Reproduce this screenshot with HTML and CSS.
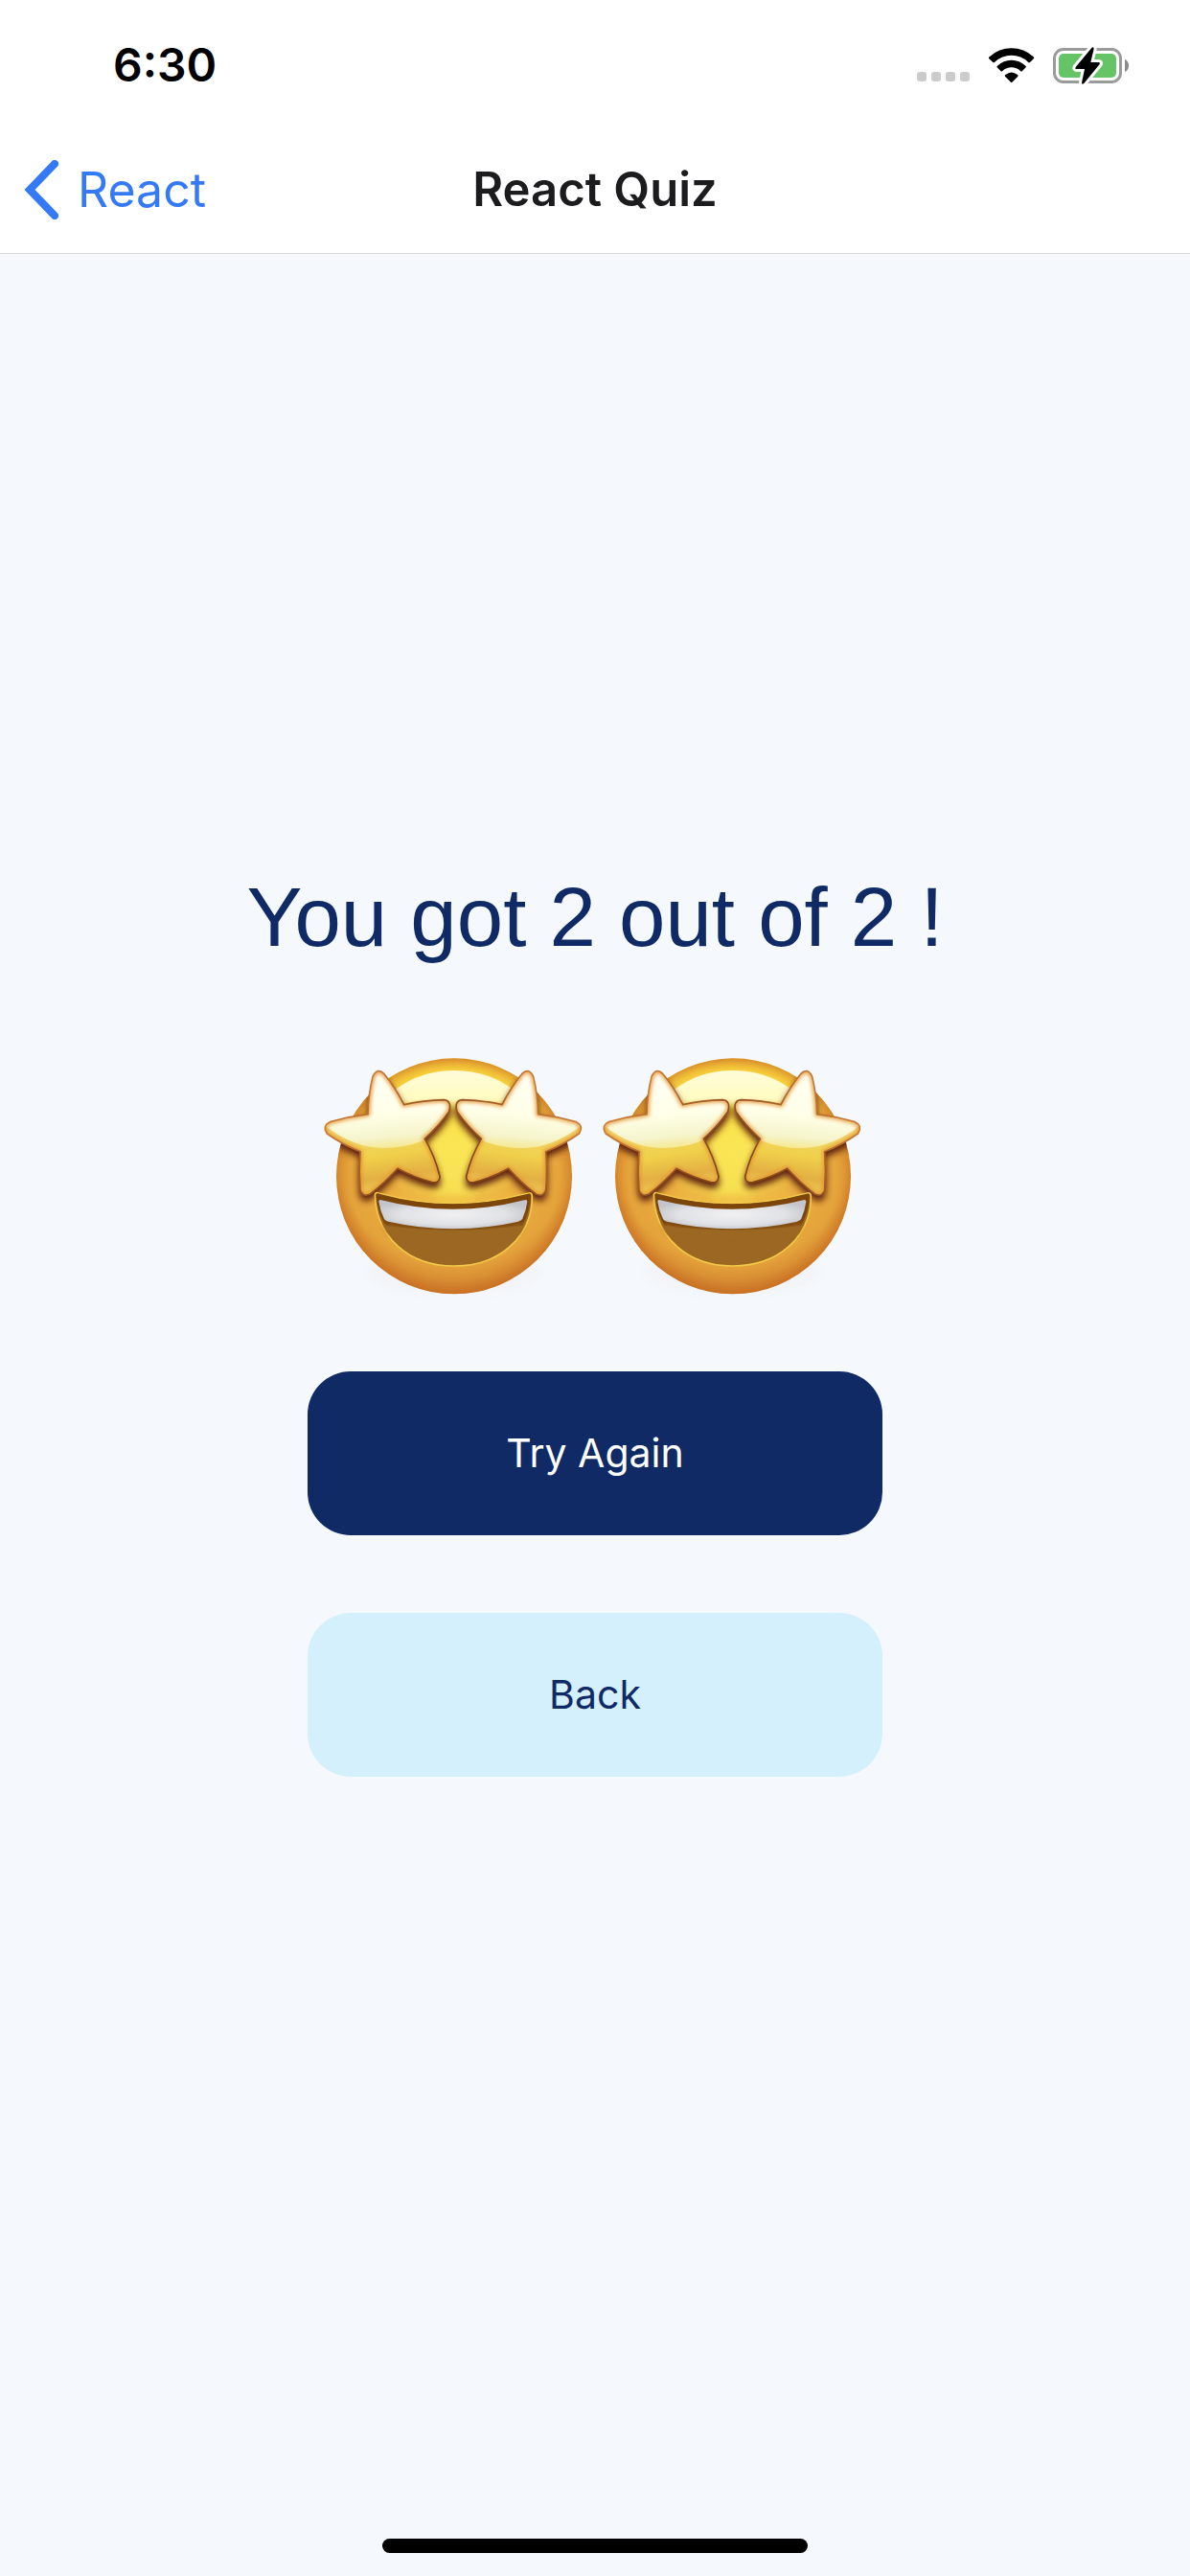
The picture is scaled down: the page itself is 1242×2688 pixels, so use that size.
FILE: index.html
```html
<!DOCTYPE html>
<html lang="en">
<head>
<meta charset="utf-8">
<meta name="viewport" content="width=device-width, initial-scale=1">
<title>React Quiz</title>
<link rel="stylesheet" href="styles.css">
</head>
<body>
<div class="screen">
  <header class="header">
    <div class="status-bar">
      <span class="clock">6:30</span>
      <div class="status-icons">
        <svg class="icon-signal" viewBox="0 0 165 30" aria-hidden="true">
          <rect width="30" height="30" rx="9"/><rect x="45" width="30" height="30" rx="9"/><rect x="90" width="30" height="30" rx="9"/><rect x="135" width="30" height="30" rx="9"/>
        </svg>
        <svg class="icon-wifi" viewBox="333 84 147 114" aria-hidden="true">
          <path d="M336 120Q335 117 338 115A100 100 0 0 1 476 115Q479 117 477 120L465 132Q462 134 459 131A76 76 0 0 0 355 131Q352 134 349 132Z"/>
          <path d="M362 148Q360 145 363 143A63 63 0 0 1 451 143Q454 145 452 148L441 159Q438 162 435 159A41 41 0 0 0 379 159Q376 162 373 159Z"/>
          <path d="M387 176Q385 173 388 171Q407 156 426 171Q429 173 427 176L409 194Q407 196 405 194Z"/>
        </svg>
        <svg class="icon-battery" viewBox="537 81 240 123" aria-hidden="true">
          <rect x="541.5" y="91.5" width="207" height="102" rx="28" fill="none" stroke="#9b9b9b" stroke-width="9"/>
          <rect x="555" y="105" width="180" height="75" rx="15" fill="#65c466"/>
          <path d="M762 122Q774 128 774 142Q774 157 762 162Z" fill="#8b8b8b"/>
          <path d="M658 87L608 147Q605 153 611 153L636 153L627 196Q627 203 634 198L683 138Q686 132 679 132L655 132L665 90Q664 82 658 87Z" fill="#000" stroke="#fff" stroke-width="18" stroke-linejoin="round" paint-order="stroke"/>
        </svg>
      </div>
    </div>
    <nav class="nav-bar">
      <a class="nav-back" href="#react">
        <svg class="icon-chevron" viewBox="0 0 37 62" aria-hidden="true"><path d="M33 4L7 31L33 58" /></svg>
        <span>React</span>
      </a>
      <h1 class="nav-title">React Quiz</h1>
    </nav>
  </header>

  <main class="result">
    <p class="score">You got 2 out of 2 !</p>
    <div class="faces" role="img" aria-label="Two star-struck faces">
      <svg class="face" viewBox="30 0 873 870" aria-hidden="true">
        <defs>
          <radialGradient id="skin" gradientUnits="userSpaceOnUse" cx="462" cy="350" r="460">
            <stop offset="0" stop-color="#fbee5c"/><stop offset=".28" stop-color="#f6d751"/><stop offset=".48" stop-color="#e9ad40"/><stop offset=".8" stop-color="#e5a43b"/><stop offset="1" stop-color="#cc782b"/>
          </radialGradient>
          <radialGradient id="rim" gradientUnits="userSpaceOnUse" cx="462" cy="442" r="369">
            <stop offset=".88" stop-color="#d17b24" stop-opacity="0"/><stop offset="1" stop-color="#c4671c" stop-opacity=".5"/>
          </radialGradient>
          <linearGradient id="crown" x1="0" y1="0" x2="0" y2="1">
            <stop offset="0" stop-color="#fbd23a"/><stop offset=".7" stop-color="#fbe34d"/><stop offset="1" stop-color="#fbe34d" stop-opacity="0"/>
          </linearGradient>
          <linearGradient id="shine" x1="0" y1="0" x2="0" y2="1">
            <stop offset="0" stop-color="#fffcd9"/><stop offset=".6" stop-color="#fffbc0"/><stop offset="1" stop-color="#faea60" stop-opacity="0"/>
          </linearGradient>
          <linearGradient id="star" gradientUnits="userSpaceOnUse" x1="225" y1="110" x2="280" y2="500">
            <stop offset="0" stop-color="#fff7d8"/><stop offset=".5" stop-color="#f1d669"/><stop offset=".68" stop-color="#f0d04a"/><stop offset=".85" stop-color="#e3b044"/><stop offset="1" stop-color="#f3d257"/>
          </linearGradient>
          <linearGradient id="edge" gradientUnits="userSpaceOnUse" x1="80" y1="160" x2="430" y2="430">
            <stop offset="0" stop-color="#d9893a"/><stop offset=".5" stop-color="#a8602a"/><stop offset="1" stop-color="#7c421a"/>
          </linearGradient>
          <linearGradient id="gloss" gradientUnits="userSpaceOnUse" x1="230" y1="120" x2="250" y2="355">
            <stop offset="0" stop-color="#fffff5"/><stop offset=".55" stop-color="#ffffe8"/><stop offset=".85" stop-color="#f5f4cc"/><stop offset="1" stop-color="#f6e892"/>
          </linearGradient>
          <radialGradient id="teeth" cx=".5" cy=".5" r=".55"><stop offset="0" stop-color="#f0f0f2"/><stop offset=".65" stop-color="#e1e2e5"/><stop offset="1" stop-color="#c3c5cb"/></radialGradient>
          <filter id="soft" x="-30%" y="-30%" width="160%" height="160%"><feGaussianBlur stdDeviation="11"/></filter>
          <filter id="softer" x="-30%" y="-30%" width="160%" height="160%"><feGaussianBlur stdDeviation="6"/></filter>
          <clipPath id="head"><circle cx="462" cy="442" r="369"/></clipPath>
          <path id="star-shape" d="M207 130Q222 100 243 122Q278 164 305 218Q366 204 430 203Q456 206 446 240Q414 286 370 325Q402 380 417 443Q416 465 392 461Q335 446 285 418Q246 462 199 498Q176 508 168 486Q163 426 168 365Q114 344 64 309Q48 284 73 272Q132 255 192 248Q193 188 207 130Z"/>
          <clipPath id="star-clip"><use href="#star-shape"/></clipPath>
          <g id="star-eye">
            <use href="#star-shape" fill="url(#star)"/>
            <g clip-path="url(#star-clip)">
              <path d="M40 90H470V250Q390 354 240 354Q140 354 40 270Z" fill="url(#gloss)"/>
              <use href="#star-shape" fill="none" stroke="#e3922f" stroke-width="13" filter="url(#softer)"/>
            </g>
            <use href="#star-shape" fill="none" stroke="url(#edge)" stroke-width="5"/>
          </g>
          <g id="star-face">
            <ellipse cx="462" cy="745" rx="280" ry="76" fill="#b89a78" opacity=".04" filter="url(#soft)"/>
            <circle cx="462" cy="442" r="369" fill="url(#skin)"/>
            <g clip-path="url(#head)">
              <ellipse cx="462" cy="230" rx="275" ry="150" fill="url(#crown)" filter="url(#soft)"/>
              <ellipse cx="462" cy="440" rx="75" ry="130" fill="#f9e453" opacity=".65" filter="url(#soft)"/>
              <circle cx="462" cy="442" r="369" fill="url(#rim)"/>
              <path d="M240 205Q330 111 462 111Q594 111 684 205L650 260Q462 200 274 260Z" fill="url(#shine)"/>
              <g fill="#5f240b" stroke="#5f240b" stroke-width="6" filter="url(#soft)">
                <use href="#star-shape" y="16"/>
                <use href="#star-shape" y="16" transform="matrix(-1 0 0 1 917 0)"/>
              </g>
              <path d="M300 480Q458 525 620 480L670 514Q462 550 248 514Z" fill="#eeb843" opacity=".7" filter="url(#soft)"/>
            </g>
            <path d="M214 502Q214 490 228 496Q456 558 692 496Q706 490 706 506C705 635 602 723 462 723S219 635 214 502Z" fill="#9b6722" stroke="#f2c849" stroke-width="5"/>
            <path d="M218 502Q218 492 230 498Q456 560 690 498Q702 492 702 506Q700 550 675 597Q457 625 248 597Q221 552 218 502Z" fill="#7c450c"/>
            <path d="M238 592Q462 632 680 592L664 622Q462 650 256 622Z" fill="#9b6722" filter="url(#softer)"/>
            <path d="M226 521Q226 514 234 517Q458 574 682 517Q691 514 691 522Q687 552 675 577Q671 582 660 585Q457 629 260 585Q246 582 243 576Q230 550 226 521Z" fill="url(#teeth)"/>
            <use href="#star-eye"/>
            <use href="#star-eye" transform="matrix(-1 0 0 1 917 0)"/>
          </g>
        </defs>
        <use href="#star-face"/>
      </svg>
      <svg class="face" viewBox="30 0 873 870" aria-hidden="true"><use href="#star-face"/></svg>
    </div>
    <div class="actions">
      <button class="button button-primary" type="button">Try Again</button>
      <button class="button button-secondary" type="button">Back</button>
    </div>
  </main>

  <footer class="home-area"><div class="home-indicator"></div></footer>
</div>
</body>
</html>
```
FILE: styles.css
```css
* {
  box-sizing: border-box;
}

body {
  margin: 0;
  background: #f5f9fe;
  color: #102a66;
  font-family: Inter, "Liberation Sans", sans-serif;
}

.screen {
  display: flex;
  flex-direction: column;
  min-height: 100vh;
}

.header {
  background: #fff;
  border-bottom: 1px solid #d8d8d8;
}

.status-bar {
  display: flex;
  align-items: center;
  justify-content: space-between;
  height: 132px;
  padding: 4px 63px 0 118px;
}

.clock {
  color: #000;
  font-size: 48px;
  font-weight: 600;
  line-height: 60px;
}

.status-icons {
  display: flex;
  align-items: center;
  gap: 19px;
}

.icon-signal {
  align-self: flex-end;
  width: 55px;
  height: 10px;
  margin-bottom: 4px;
  fill: #cbcbcb;
}

.icon-wifi {
  width: 49px;
  height: 38px;
}

.icon-battery {
  width: 80px;
  height: 41px;
}

.nav-bar {
  display: grid;
  grid-template-columns: 1fr auto 1fr;
  align-items: center;
  height: 132px;
  padding: 0 24px;
}

.nav-back {
  display: flex;
  align-items: center;
  justify-self: start;
  gap: 20px;
  color: #3479f6;
  font-size: 50px;
  line-height: 60px;
  text-decoration: none;
}

.icon-chevron {
  width: 37px;
  height: 62px;
  fill: none;
  stroke: #3479f6;
  stroke-width: 8;
  stroke-linecap: round;
  stroke-linejoin: miter;
}

.nav-title {
  margin: 0;
  color: #1c1c1e;
  font-size: 49px;
  font-weight: 600;
  line-height: 60px;
}

.result {
  display: flex;
  flex: 1;
  flex-direction: column;
  align-items: center;
  justify-content: center;
  padding: 0 24px 96px;
}

.score {
  margin: 0 0 70px;
  font-family: "Liberation Sans", Arial, sans-serif;
  font-size: 87px;
  line-height: 106px;
  text-align: center;
}

.faces {
  display: flex;
  justify-content: center;
  margin-bottom: 61px;
}

.face {
  width: 291px;
  height: 290px;
}

.actions {
  display: flex;
  flex-direction: column;
  gap: 81px;
  width: 100%;
  max-width: 600px;
}

.button {
  padding: 60px 24px;
  border: 0;
  border-radius: 45px;
  font-family: inherit;
  font-size: 41px;
  line-height: 51px;
}

.button-primary {
  background: #102a66;
  color: #fff;
}

.button-secondary {
  background: #d4f0fc;
  color: #102a66;
}

.home-area {
  display: flex;
  justify-content: center;
  padding: 60px 24px 24px;
}

.home-indicator {
  width: 444px;
  height: 15px;
  border-radius: 8px;
  background: #000;
}
```
